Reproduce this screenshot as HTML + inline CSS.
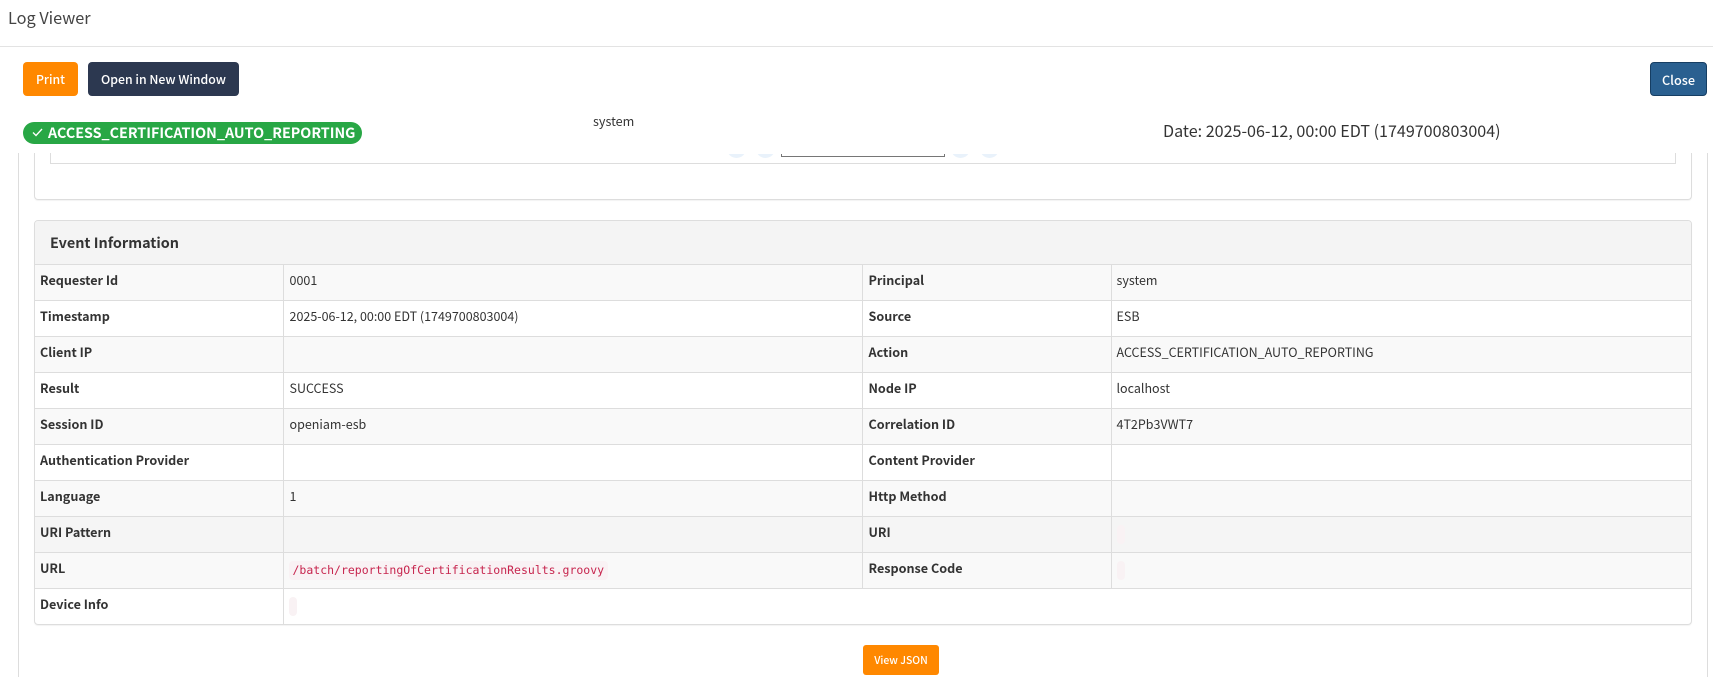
<!DOCTYPE html>
<html lang="en"><head><meta charset="utf-8"><title>Log Viewer</title>
<style>
html,body{margin:0;padding:0;background:#fff;width:1713px;height:677px;overflow:hidden}
body{position:relative;font-family:"Noto Sans CJK JP","Liberation Sans",sans-serif;color:#333;font-size:12.5px}
.a{position:absolute;box-sizing:border-box;white-space:nowrap}
.btn{border-radius:4px;color:#fff;text-align:center;font-size:12.3px;font-weight:500}
table{position:absolute;left:35px;top:264px;width:1656px;border-collapse:collapse;table-layout:fixed}
td{height:36px;box-sizing:border-box;border:1px solid #ddd;padding:0 5px 5px;line-height:20px;font-size:12.5px;white-space:nowrap;color:#333}
td:first-child{border-left:0}td:last-child{border-right:0}
td:nth-child(2),td:nth-child(3){padding-left:6px}
tr:last-child td{border-bottom:0}
td.k{font-weight:700;color:#333;font-size:12.6px}
tr.o td{background:#f9f9f9}tr.h td{background:#f5f5f5}
td.c{padding-bottom:2px;padding-top:0;padding-left:5px}
code{display:inline-block;vertical-align:middle;height:19px;line-height:19px;min-width:8px;box-sizing:border-box;padding:0 4px;background:#f9f2f4;color:#c7254e;border-radius:4px;font:11.5px/19px "DejaVu Sans Mono","Liberation Mono",monospace}
.d{width:19px;height:19px;top:139px;background:#e9f2fb;border-radius:50%;clip-path:inset(15px 0 0 0)}
</style></head><body>
<div class="a" style="left:8px;top:4px;font-size:16.3px;line-height:26px;color:#444">Log Viewer</div>
<div class="a" style="left:0;top:46px;width:1713px;height:1px;background:#e3e3e3"></div>

<div class="a btn" style="left:23px;top:62px;width:55px;height:34px;line-height:35px;background:#ff8800">Print</div>
<div class="a btn" style="left:88px;top:62px;width:151px;height:34px;line-height:35px;background:#2c3850">Open in New Window</div>
<div class="a btn" style="left:1650px;top:62px;width:57px;height:34px;line-height:33px;font-size:12.7px;background:#2a6090;border:1px solid #163e63">Close</div>

<div class="a" style="left:23px;top:122px;width:339px;height:22px;border-radius:11px;background:#28a745;color:#fff;font-weight:700;font-size:14.3px;line-height:22px;padding-left:25px">ACCESS_CERTIFICATION_AUTO_REPORTING
<svg style="position:absolute;left:9px;top:6px" width="11" height="9" viewBox="0 0 11 9"><path d="M1 4.5 L4 7.5 L10 1" fill="none" stroke="#fff" stroke-width="1.3"/></svg></div>
<div class="a" style="left:593px;top:111px;font-size:12.6px;line-height:20px;color:#333">system</div>
<div class="a" style="left:1163px;top:118px;font-size:16.1px;line-height:24px;color:#333">Date: 2025-06-12, 00:00 EDT (1749700803004)</div>

<div class="a" style="left:18px;top:153px;width:1px;height:524px;background:#ddd"></div>
<div class="a" style="left:1707px;top:153px;width:1px;height:524px;background:#ddd"></div>
<div class="a" style="left:34px;top:153px;width:1658px;height:47px;border:1px solid #ddd;border-top:0;border-radius:0 0 4px 4px;box-shadow:0 1px 1px rgba(0,0,0,.05)"></div>
<div class="a" style="left:50px;top:153px;width:1626px;height:11px;border:1px solid #ddd;border-top:0"></div>
<div class="a d" style="left:727px"></div>
<div class="a d" style="left:756px"></div>
<div class="a" style="left:781px;top:154px;width:164px;height:3px;border:1px solid #767676;border-top:0"></div>
<div class="a d" style="left:951px"></div>
<div class="a d" style="left:980px"></div>

<div class="a" style="left:34px;top:220px;width:1658px;height:405px;border:1px solid #ddd;border-radius:4px;box-shadow:0 1px 1px rgba(0,0,0,.05)"></div>
<div class="a" style="left:35px;top:221px;width:1656px;height:44px;background:#f4f4f4;border-radius:3px 3px 0 0;font-weight:700;font-size:14.4px;line-height:43px;padding-left:15px;color:#333">Event Information</div>
<table>
<colgroup><col style="width:248px"><col style="width:579px"><col style="width:249px"><col></colgroup>
<tr class="o"><td class="k">Requester Id</td><td>0001</td><td class="k">Principal</td><td>system</td></tr>
<tr><td class="k">Timestamp</td><td>2025-06-12, 00:00 EDT (1749700803004)</td><td class="k">Source</td><td>ESB</td></tr>
<tr class="o"><td class="k">Client IP</td><td></td><td class="k">Action</td><td>ACCESS_CERTIFICATION_AUTO_REPORTING</td></tr>
<tr><td class="k">Result</td><td>SUCCESS</td><td class="k">Node IP</td><td>localhost</td></tr>
<tr class="o"><td class="k">Session ID</td><td>openiam-esb</td><td class="k">Correlation ID</td><td>4T2Pb3VWT7</td></tr>
<tr><td class="k">Authentication Provider</td><td></td><td class="k">Content Provider</td><td></td></tr>
<tr class="o"><td class="k">Language</td><td>1</td><td class="k">Http Method</td><td></td></tr>
<tr class="h"><td class="k">URI Pattern</td><td></td><td class="k">URI</td><td class="c"><code></code></td></tr>
<tr class="o"><td class="k">URL</td><td class="c"><code>/batch/reportingOfCertificationResults.groovy</code></td><td class="k">Response Code</td><td class="c"><code></code></td></tr>
<tr><td class="k">Device Info</td><td colspan="3" class="c"><code></code></td></tr>
</table>
<div class="a btn" style="left:863px;top:645px;width:76px;height:30px;line-height:30px;background:#ff8800;font-size:10.4px;border-radius:3px">View JSON</div>
</body></html>
